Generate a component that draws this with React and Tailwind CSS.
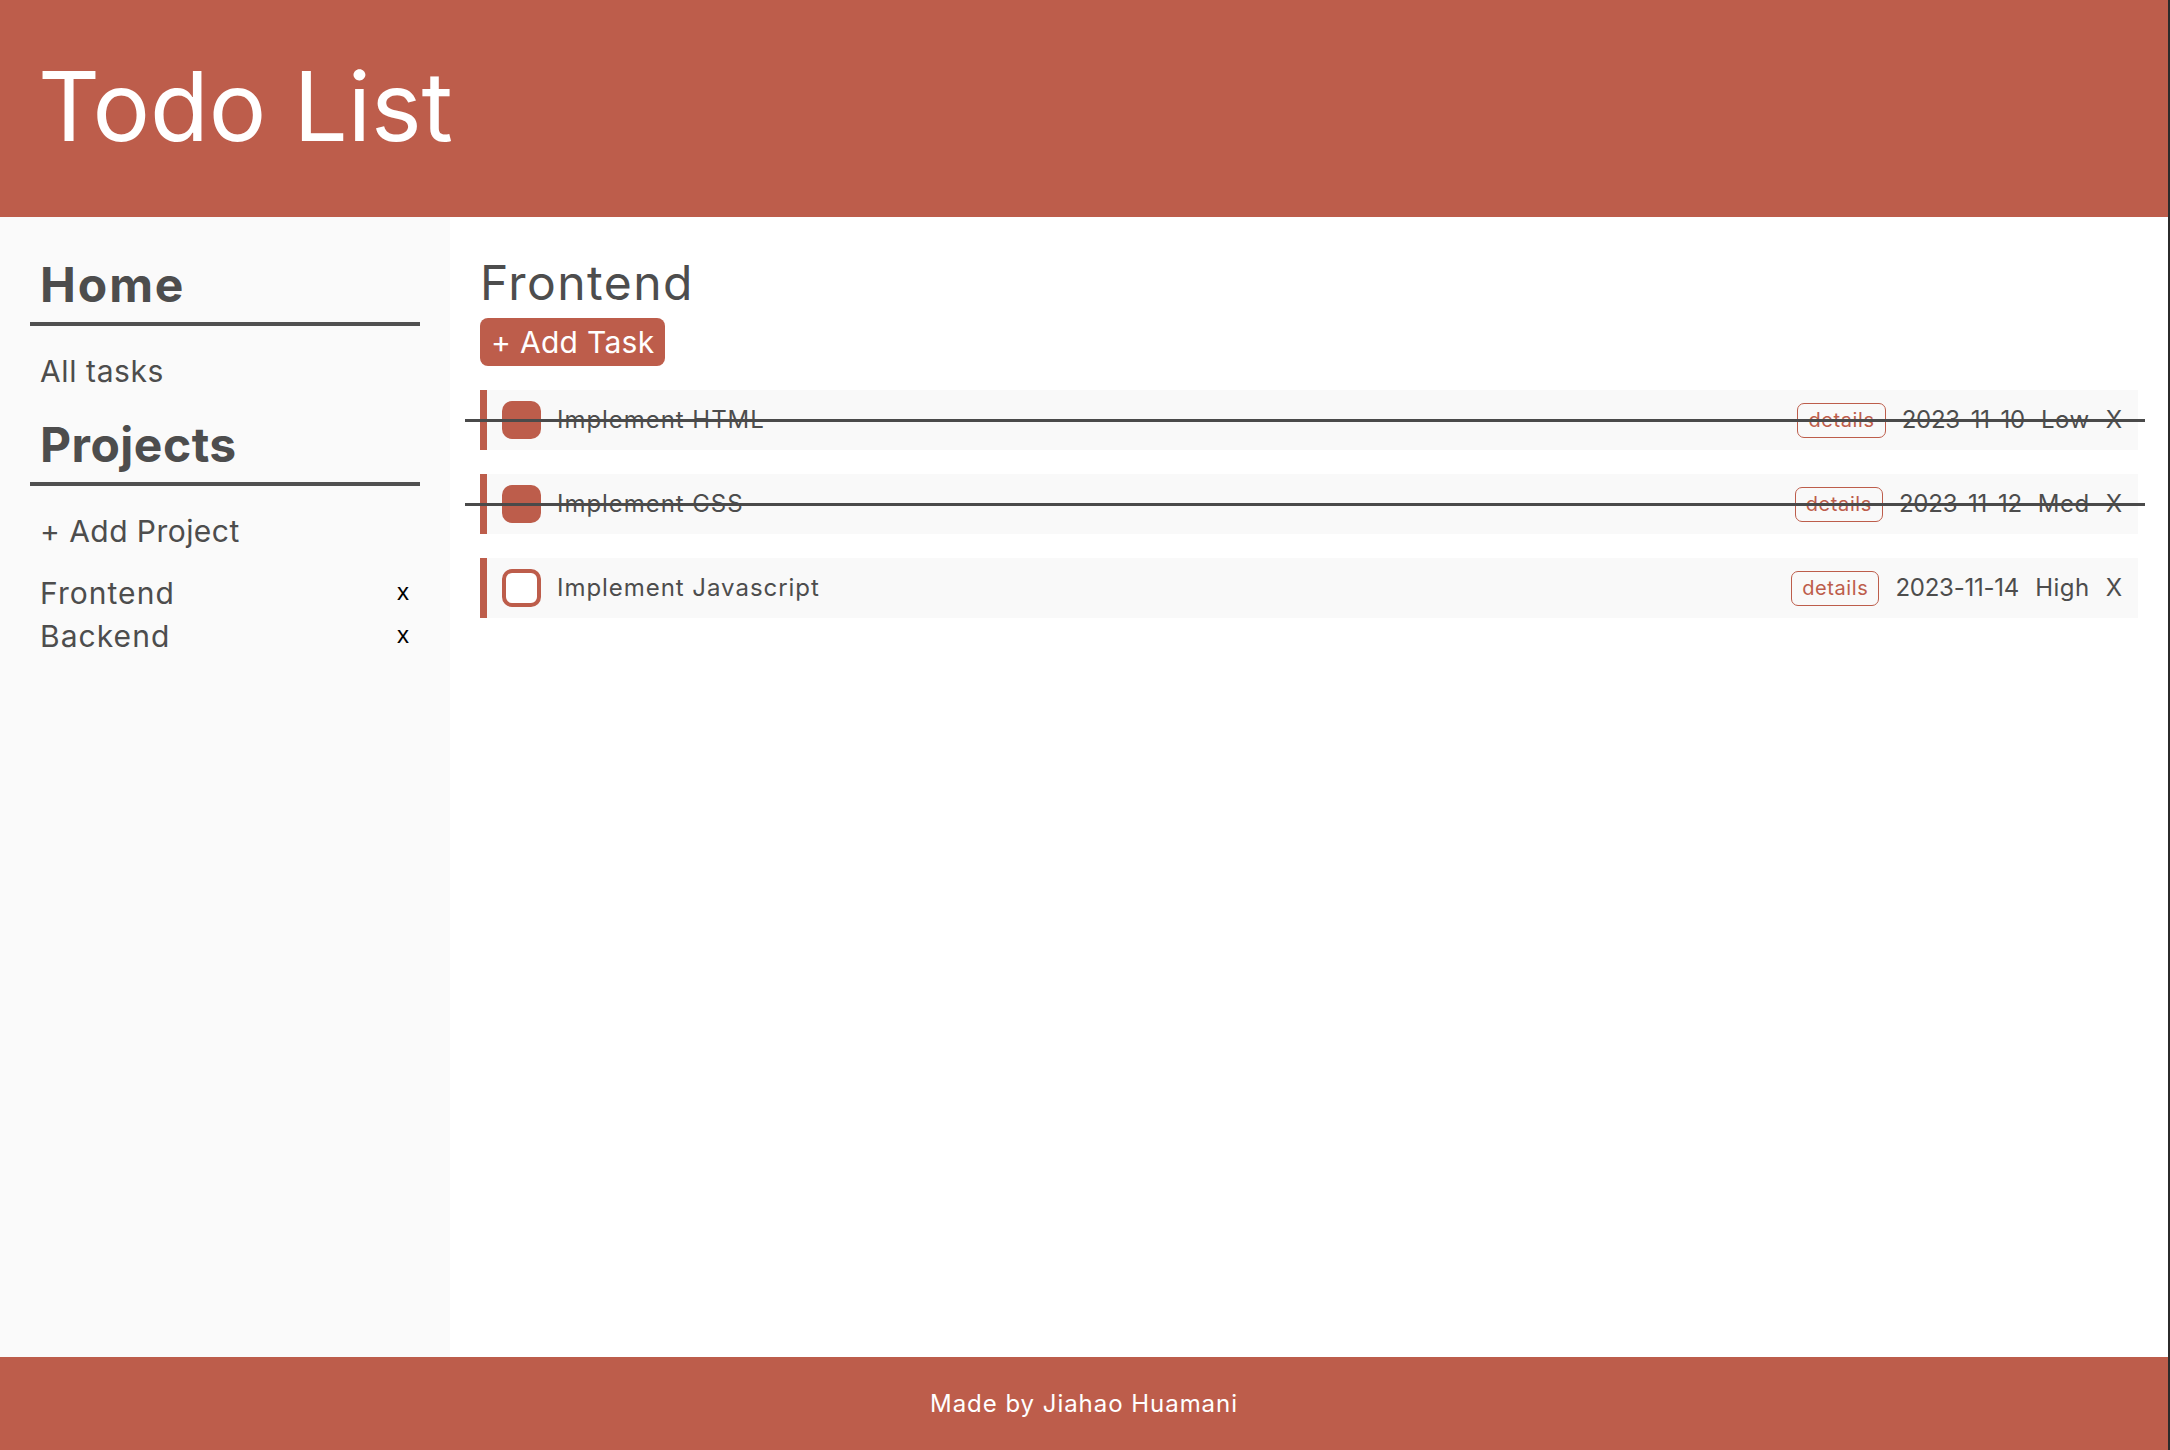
import React, { useState } from "react";

const initialTasks = [
  { id: 1, title: "Implement HTML", date: "2023-11-10", priority: "Low", done: true },
  { id: 2, title: "Implement CSS", date: "2023-11-12", priority: "Med", done: true },
  { id: 3, title: "Implement Javascript", date: "2023-11-14", priority: "High", done: false },
];

const TaskRow = ({ task, onToggle, onDelete }) => {
  return (
    <div className="relative flex items-center h-[60px] bg-[#f9f9f9] border-l-[7px] border-[#bd5d4b] pl-[15px] pr-[16px]">
      {/* Checkbox */}
      <button
        type="button"
        onClick={() => onToggle(task.id)}
        className={
          task.done
            ? "w-[39px] h-[38px] rounded-[10px] bg-[#bd5d4b]"
            : "w-[39px] h-[38px] rounded-[10px] border-[4px] border-[#bd5d4b] bg-white"
        }
      ></button>

      <span className="ml-[16px] text-[24px] tracking-[0.04em] text-[#4d4d4d]">{task.title}</span>

      <div className="ml-auto flex items-center gap-[16px] text-[24px] text-[#4d4d4d]">
        <button
          type="button"
          className="h-[35px] px-[10px] rounded-[7px] border-[1.5px] border-[#bd5d4b] text-[20px] tracking-[0.03em] text-[#bd5d4b] leading-none"
        >
          details
        </button>
        <span className="tracking-[-0.01em]">{task.date}</span>
        <span className="tracking-[0.02em]">{task.priority}</span>
        <button type="button" onClick={() => onDelete(task.id)}>
          X
        </button>
      </div>

      {/* line through finished tasks */}
      {task.done && (
        <div className="absolute left-[-22px] right-[-7px] top-[29px] h-[3px] bg-[#4a4a4a]"></div>
      )}
    </div>
  );
};

export default function App() {
  const [tasks, setTasks] = useState(initialTasks);
  const projects = ["Frontend", "Backend"];

  const toggleTask = (id) => {
    setTasks(tasks.map((t) => (t.id === id ? { ...t, done: !t.done } : t)));
  };

  const deleteTask = (id) => {
    setTasks(tasks.filter((t) => t.id !== id));
  };

  return (
    <div
      className="h-screen flex flex-col border-r-2 border-[#2b2b2b] text-[#4d4d4d]"
      style={{ fontFamily: "Inter, 'Noto Sans', sans-serif" }}
    >
      {/* Header */}
      <header className="h-[217px] shrink-0 bg-[#bd5d4b] pl-[38px] pt-[58px]">
        <h1 className="text-[96px] leading-none text-white">Todo List</h1>
      </header>

      <div className="flex flex-1 min-h-0">
        {/* Sidebar */}
        <aside className="w-[450px] shrink-0 bg-[#fafafa] p-[30px]">
          <h2 className="pl-[10px] text-[48px] leading-[75px] font-bold tracking-[0.04em] border-b-[4px] border-[#505050]">
            Home
          </h2>
          <div className="mt-[24px] pl-[10px] text-[30px] leading-[43px] tracking-[0.02em]">All tasks</div>

          <h2 className="mt-[14px] pl-[10px] text-[48px] leading-[75px] font-bold tracking-[0.01em] border-b-[4px] border-[#505050]">
            Projects
          </h2>
          <div className="mt-[24px] pl-[10px] text-[30px] leading-[43px] tracking-[0.015em]">+ Add Project</div>

          <ul className="mt-[19px]">
            {projects.map((p) => (
              <li
                key={p}
                className="flex items-center justify-between pl-[10px] pr-[10px] text-[30px] leading-[43px] tracking-[0.035em]"
              >
                <span>{p}</span>
                <button
                  type="button"
                  className="text-[24px] leading-none text-black mb-[4px]"
                  style={{ fontFamily: "'Liberation Sans', Arial, sans-serif" }}
                >
                  x
                </button>
              </li>
            ))}
          </ul>
        </aside>

        {/* Main */}
        <main className="flex-1 bg-white p-[30px]">
          <h2 className="text-[48px] leading-[71px] tracking-[0.03em]">Frontend</h2>
          <button
            type="button"
            className="h-[48px] px-[11px] rounded-[8px] bg-[#bd5d4b] text-white text-[30px] leading-[48px] tracking-[0.01em]"
          >
            + Add Task
          </button>

          <div className="mt-[24px] flex flex-col gap-[24px]">
            {tasks.map((t) => (
              <TaskRow key={t.id} task={t} onToggle={toggleTask} onDelete={deleteTask} />
            ))}
          </div>
        </main>
      </div>

      {/* Footer */}
      <footer className="h-[93px] shrink-0 bg-[#bd5d4b] flex items-center justify-center text-white text-[24px] tracking-[0.04em]">
        Made by Jiahao Huamani
      </footer>
    </div>
  );
}
